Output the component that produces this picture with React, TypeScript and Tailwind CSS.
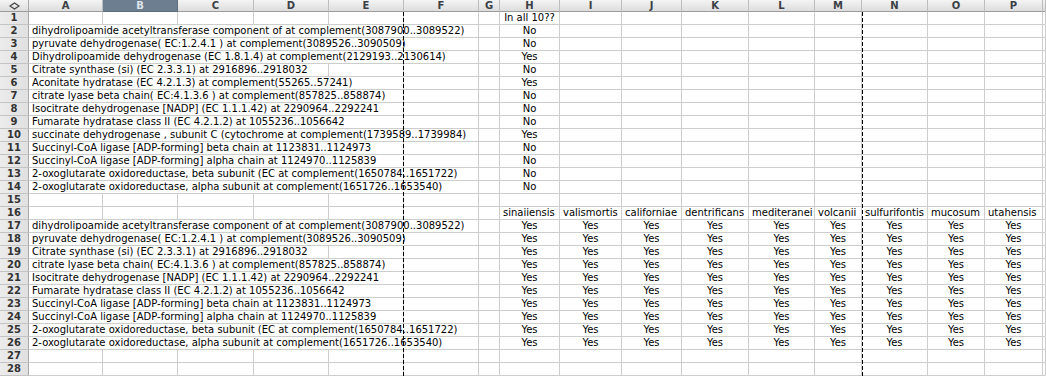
const cols = ['A', 'B', 'C', 'D', 'E', 'F', 'G', 'H', 'I', 'J', 'K', 'L', 'M', 'N', 'O', 'P', ''];

const genes = {
  dihydro: 'dihydrolipoamide acetyltransferase component of at complement(3087900..3089522)',
  pyruvate: 'pyruvate dehydrogenase( EC:1.2.4.1 ) at complement(3089526..3090509)',
  dld: 'Dihydrolipoamide dehydrogenase (EC 1.8.1.4) at complement(2129193..2130614)',
  citrate: 'Citrate synthase (si) (EC 2.3.3.1) at 2916896..2918032',
  aconitate: 'Aconitate hydratase (EC 4.2.1.3) at complement(55265..57241)',
  lyase: 'citrate lyase beta chain( EC:4.1.3.6 ) at complement(857825..858874)',
  isocitrate: 'Isocitrate dehydrogenase [NADP] (EC 1.1.1.42) at 2290964..2292241',
  fumarate: 'Fumarate hydratase class II (EC 4.2.1.2) at 1055236..1056642',
  succinate: 'succinate dehydrogenase , subunit C (cytochrome at complement(1739589..1739984)',
  scoaBeta: 'Succinyl-CoA ligase [ADP-forming] beta chain at 1123831..1124973',
  scoaAlpha: 'Succinyl-CoA ligase [ADP-forming] alpha chain at 1124970..1125839',
  oxoBeta: '2-oxoglutarate oxidoreductase, beta subunit (EC at complement(1650784..1651722)',
  oxoAlpha: '2-oxoglutarate oxidoreductase, alpha subunit at complement(1651726..1653540)',
};

const species = [
  'sinaiiensis',
  'valismortis',
  'californiae',
  'dentrificans',
  'mediteranei',
  'volcanii',
  'sulfurifontis',
  'mucosum',
  'utahensis',
];

type Row = { text?: string; h?: string; rest?: string[]; left?: boolean };

const yes9 = species.map(() => 'Yes');

const rows: Row[] = [
  { h: 'In all 10??' },
  { text: genes.dihydro, h: 'No' },
  { text: genes.pyruvate, h: 'No' },
  { text: genes.dld, h: 'Yes' },
  { text: genes.citrate, h: 'No' },
  { text: genes.aconitate, h: 'Yes' },
  { text: genes.lyase, h: 'No' },
  { text: genes.isocitrate, h: 'No' },
  { text: genes.fumarate, h: 'No' },
  { text: genes.succinate, h: 'Yes' },
  { text: genes.scoaBeta, h: 'No' },
  { text: genes.scoaAlpha, h: 'No' },
  { text: genes.oxoBeta, h: 'No' },
  { text: genes.oxoAlpha, h: 'No' },
  {},
  { rest: species, left: true },
  { text: genes.dihydro, rest: yes9 },
  { text: genes.pyruvate, rest: yes9 },
  { text: genes.citrate, rest: yes9 },
  { text: genes.lyase, rest: yes9 },
  { text: genes.isocitrate, rest: yes9 },
  { text: genes.fumarate, rest: yes9 },
  { text: genes.scoaBeta, rest: yes9 },
  { text: genes.scoaAlpha, rest: yes9 },
  { text: genes.oxoBeta, rest: yes9 },
  { text: genes.oxoAlpha, rest: yes9 },
  {},
  {},
];

const gridCols =
  'grid grid-cols-[29px_74px_75px_76px_75px_75px_75px_21px_60px_62px_60px_67px_66px_47px_66px_57px_58px_1fr]';

function SheetRow({ n, row }: { n: number; row: Row }) {
  // H..P values: H is column index 7 in cols
  const values: Record<number, string> = {};
  if (row.h) values[7] = row.h;
  if (row.rest) row.rest.forEach((v, i) => (values[7 + i] = v));

  return (
    <div className={`${gridCols} h-[13px]`}>
      <div className="h-[13px] border-r border-b border-r-[#a9a9a9] border-b-[#c4c4c4] bg-gradient-to-r from-[#ececec] to-[#e0e0e0] text-center text-[10px] font-bold leading-[12px] text-[#333]">
        {n}
      </div>
      {cols.map((c, i) => (
        <div
          key={c + i}
          className={`h-[13px] border-r border-b border-[#cdcdcd] leading-[12px] ${
            values[i] && !row.left ? 'text-center' : ''
          }`}
        >
          {i === 0 && row.text ? (
            <span className="relative z-10 block w-max whitespace-nowrap bg-white pl-[3px] pr-[1px]">
              {row.text}
            </span>
          ) : values[i] ? (
            <span className={`block whitespace-nowrap ${row.left ? 'pl-[3px]' : ''}`}>{values[i]}</span>
          ) : null}
        </div>
      ))}
    </div>
  );
}

export default function App() {
  return (
    <div className="relative h-[377px] w-[1046px] overflow-hidden bg-white font-['DejaVu_Sans',sans-serif] text-[10px] text-black">
      <div className={`${gridCols} h-[12px]`}>
        <div className="flex h-[12px] items-center justify-center border-r border-b border-r-[#a9a9a9] border-b-[#9c9c9c] bg-gradient-to-b from-[#f4f4f4] to-[#dddddd]">
          <svg width="11" height="8" viewBox="0 0 11 8">
            <polygon points="1,4 5.5,1 10,4 5.5,7" fill="none" stroke="#444" strokeWidth="1.2" />
          </svg>
        </div>
        {cols.map((c, i) => (
          <div
            key={c + i}
            className={`h-[12px] border-r border-b text-center text-[10px] font-bold leading-[11px] ${
              c === 'B'
                ? 'border-r-[#5d6d7e] border-b-[#5d6d7e] bg-[#6c7e90] text-[#dfe5ec]'
                : 'border-r-[#bdbdbd] border-b-[#9c9c9c] bg-gradient-to-b from-[#f4f4f4] to-[#dddddd] text-[#3b4046]'
            }`}
          >
            {c}
          </div>
        ))}
      </div>
      {rows.map((row, i) => (
        <SheetRow key={i} n={i + 1} row={row} />
      ))}
      <div className="absolute top-[12px] bottom-0 left-[403px] z-20 w-px bg-[repeating-linear-gradient(to_bottom,#000_0px,#000_4px,transparent_4px,transparent_6px)]" />
      <div className="absolute top-[12px] bottom-0 left-[862px] z-20 w-px bg-[repeating-linear-gradient(to_bottom,#000_0px,#000_4px,transparent_4px,transparent_6px)]" />
    </div>
  );
}
